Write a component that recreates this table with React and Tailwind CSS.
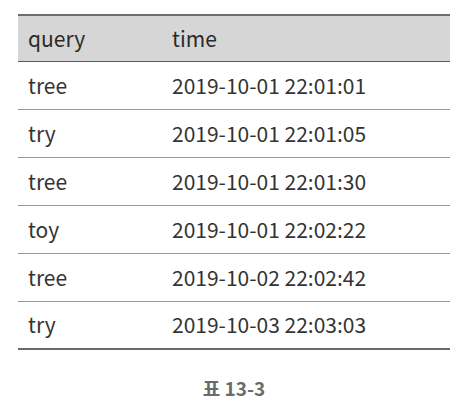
import React from "react";

const rows = [
  ["tree", "2019-10-01 22:01:01"],
  ["try", "2019-10-01 22:01:05"],
  ["tree", "2019-10-01 22:01:30"],
  ["toy", "2019-10-01 22:02:22"],
  ["tree", "2019-10-02 22:02:42"],
  ["try", "2019-10-03 22:03:03"],
];

export default function App() {
  return (
    <div
      className="w-[466px] h-[406px] bg-white pt-[14px] pl-[18px]"
      style={{ fontFamily: '"Noto Sans CJK KR", "Noto Sans", sans-serif' }}
    >
      <div className="w-[432px]">
        {/* header */}
        <div className="flex items-center h-[48px] bg-[#d6d6d6] border-t-2 border-[#6e6e6e] border-b border-b-[#5a5a5a] text-[21px] text-[#2a2a2a]">
          <div className="w-[154px] pl-[10px]">query</div>
          <div>time</div>
        </div>
        {rows.map((r, i) => (
          <div
            key={i}
            className={`flex items-center h-[48px] text-[21px] text-[#333333] ${
              i === rows.length - 1
                ? "border-b-2 border-[#6a6a6a]"
                : "border-b border-[#9a9a9a]"
            }`}
          >
            <div className="w-[154px] pl-[10px]">{r[0]}</div>
            <div>{r[1]}</div>
          </div>
        ))}
      </div>
      <div className="w-[432px] mt-[24px] text-center text-[19px] font-bold text-[#6b6b6b]">
        표 13-3
      </div>
    </div>
  );
}
